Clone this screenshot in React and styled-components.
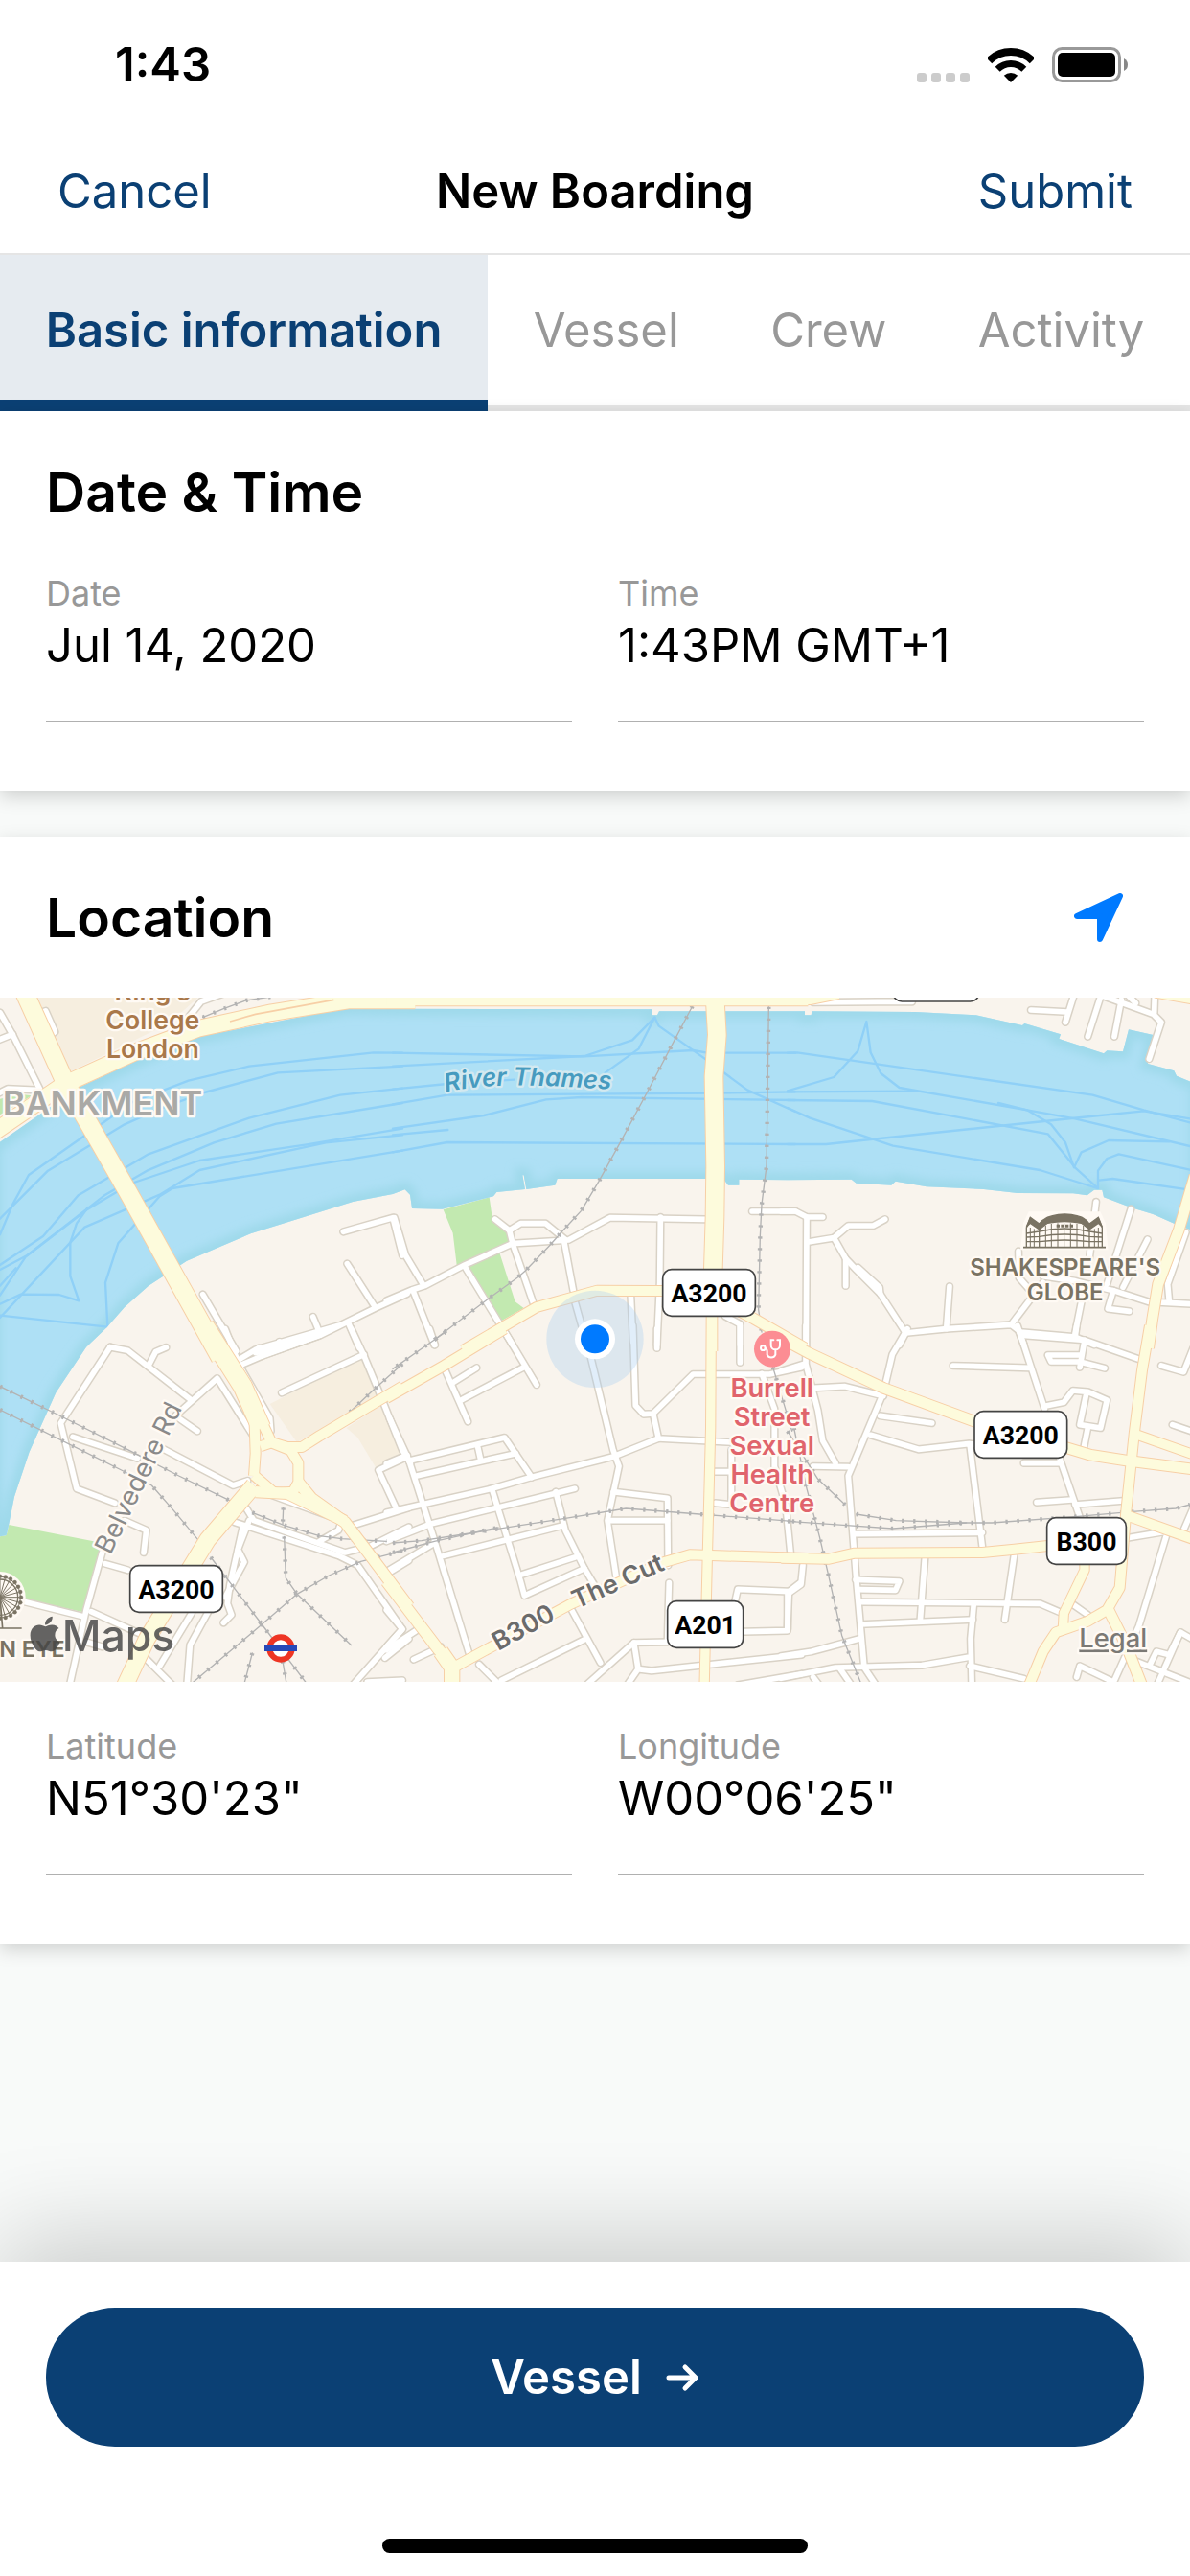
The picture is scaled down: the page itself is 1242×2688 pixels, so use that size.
import React from "react";
import styled, { createGlobalStyle } from "styled-components";
import { FaApple } from "react-icons/fa";

const Colors = {
  Primary: "#0b4074",
  PrimaryLight: "#e6ebf0",
  Link: "#007aff",
  Muted: "#989898",
  Line: "#e5e5e5",
  Background: "#f8faf9",
};

const GlobalStyle = createGlobalStyle`
  * {
    box-sizing: border-box;
  }

  body {
    margin: 0;
    font-family: Inter, "Liberation Sans", sans-serif;
    color: #000;
    background: ${Colors.Background};
  }

  button,
  input {
    font: inherit;
    color: inherit;
    background: none;
    border: 0;
    border-radius: 0;
    padding: 0;
    margin: 0;
  }
`;

const Screen = styled.div`
  display: flex;
  flex-direction: column;
  min-height: 100vh;
  overflow: hidden;
`;

const StatusBar = styled.div`
  display: flex;
  align-items: center;
  justify-content: space-between;
  height: 134px;
  padding: 0 64px 0 120px;
  background: #fff;
`;

const Clock = styled.time`
  font-size: 49px;
  font-weight: 600;
`;

const StatusIcons = styled.div`
  display: flex;
  align-items: flex-end;
  gap: 19px;

  svg {
    display: block;
  }
`;

const NavBar = styled.header`
  display: grid;
  grid-template-columns: 1fr auto 1fr;
  align-items: center;
  height: 132px;
  padding: 0 60px;
  background: #fff;
  border-bottom: 2px solid ${Colors.Line};
`;

const NavTitle = styled.h1`
  margin: 0;
  font-size: 49px;
  font-weight: 600;
`;

const NavButton = styled.button`
  justify-self: ${(props) => props.$side};
  font-size: 49px;
  color: ${Colors.Primary};
`;

const TabBar = styled.nav`
  display: flex;
  background: #fff;
`;

const Tab = styled.button`
  flex: 1 1 auto;
  height: 163px;
  padding: 0 40px 6px;
  font-size: 49px;
  font-weight: ${(props) => (props.$active ? 600 : 400)};
  white-space: nowrap;
  color: ${(props) => (props.$active ? Colors.Primary : Colors.Muted)};
  background: ${(props) => (props.$active ? Colors.PrimaryLight : "#fff")};
  box-shadow: inset 0 ${(props) =>
    props.$active ? `-12px ${Colors.Primary}` : `-6px ${Colors.Line}`};
`;

const Content = styled.main`
  display: flex;
  flex-direction: column;
  gap: 48px;
  padding-bottom: 48px;
`;

const Card = styled.section`
  background: #fff;
  box-shadow: 0 6px 18px rgba(0, 0, 0, 0.17);
`;

const CardHeader = styled.div`
  display: flex;
  align-items: center;
  justify-content: space-between;
  height: 168px;
  padding: 0 48px;
`;

const CardTitle = styled.h2`
  margin: 0;
  font-size: 57px;
  font-weight: 600;
`;

const LocateButton = styled.button`
  display: flex;
  align-items: center;
  justify-content: center;
  width: 96px;
  height: 96px;
`;

const Fields = styled.div`
  display: grid;
  grid-template-columns: 1fr 1fr;
  gap: 48px;
  padding: ${(props) => (props.$spaced ? "45px" : "0")} 48px 72px;
`;

const Field = styled.div`
  display: flex;
  flex-direction: column;
`;

const FieldLabel = styled.label`
  font-size: 36px;
  line-height: 44px;
  color: ${Colors.Muted};
`;

const FieldInput = styled.input`
  width: 100%;
  height: 112px;
  padding-bottom: 47px;
  font-size: 49px;
  line-height: 64px;
  border-bottom: 1px solid #b0b0b0;
`;

const MapView = styled.svg`
  display: block;
  width: 100%;
  height: auto;
  background: #f9f4ed;

  text {
    font-family: Inter, "Liberation Sans", sans-serif;
    font-weight: 600;
    stroke: #fffaf4;
    stroke-width: 14px;
    stroke-linejoin: round;
    paint-order: stroke;
  }
`;

const RoadLayer = styled.g`
  fill: none;
  stroke: ${(props) => props.$color};
  stroke-linecap: ${(props) => props.$cap || "round"};
  stroke-linejoin: round;
`;

const ShieldText = styled.text`
  && {
    font-family: Roboto, "Liberation Sans", sans-serif;
    font-size: 80px;
    font-weight: 700;
    stroke: none;
  }
`;

const MapLogo = styled.g`
  opacity: 0.82;
  color: #444;
  fill: #444;

  && text {
    font-size: 134px;
    font-weight: 500;
    stroke: none;
  }
`;

const Footer = styled.footer`
  display: flex;
  flex-direction: column;
  align-items: center;
  gap: 96px;
  margin-top: auto;
  padding: 48px 48px 24px;
  background: #fff;
  box-shadow: 0 -24px 96px rgba(0, 0, 0, 0.18);
`;

const NextButton = styled.button`
  display: flex;
  align-items: center;
  justify-content: center;
  gap: 24px;
  width: 100%;
  height: 145px;
  font-size: 49px;
  font-weight: 600;
  color: #fff;
  background: ${Colors.Primary};
  border-radius: 72px;
`;

const HomeIndicator = styled.div`
  width: 444px;
  max-width: 60%;
  height: 15px;
  background: #000;
  border-radius: 8px;
`;

// The map is drawn in six tiles, each list holds [width, points] or plain points
const tiles = [
  {
    x: 0,
    y: -33,
    major: [
      [56, "60 -20 205 300 400 640 690 1160"],
      [50, "-30 462 200 305 420 205 620 130 850 80 1090 42 1300 42"],
    ],
    minor: [
      "0 80 40 150 125 320",
      "-10 168 40 148",
      "-10 335 25 318 110 322",
      "130 80 143 75 172 140 160 150",
      "590 95 630 45 700 20",
      "1075 766 1230 722 1260 840",
      "1087 866 1175 1003",
      "980 1032 1002 1085 800 1145",
      "830 1150 1002 1090 1175 1005 1275 960",
      "1090 1050 1125 1130",
      "635 962 740 1140",
    ],
    rail: ["635 95 700 68 770 42 850 30"],
    flow: [
      "0 725 150 575 390 430 490 385 640 330 870 268 1260 248",
      "0 775 40 680 90 588 415 360 590 293 780 248 1170 205 1260 206",
      "0 870 135 780 245 652 465 523 780 410 1065 338 1260 317",
      "0 885 85 840 330 650 460 575 670 487 865 428 1260 363",
      "0 965 80 845 275 695 410 615 625 543 960 493 1260 443",
      "0 1035 265 752 500 650 625 573 1020 487 1260 463",
      "0 1028 337 1064 330 925 370 802 500 655 540 630 1260 512",
      "275 690 240 740 220 800 220 905 247 982 185 963 65 962 0 992",
      "0 935 50 880",
    ],
  },
  {
    x: 1230,
    y: -33,
    major: [
      [28, "-20 44 1300 44"],
      [56, "1009 44 1015 150 1005 280 1010 560 1008 720 1000 980"],
      [30, "1000 960 1000 1140"],
      [30, "220 1137 450 1002 640 950 1000 952"],
      [32, "1000 970 1130 1038 1290 1130"],
    ],
    minor: [
      "5 722 40 840 97 935",
      "-20 982 60 948 100 935 225 870 375 803 550 792 680 722 980 727",
      "320 727 365 762 375 803 440 990",
      "365 762 400 740 478 740 540 790",
      "537 800 565 950",
      "65 955 130 1120",
      "228 880 375 1120",
      "838 720 836 925 827 1120",
      "745 965 752 1110",
      "570 985 608 1120",
      "1125 702 1260 702",
      "1040 1030 1087 1055 1087 1120",
    ],
    rail: [
      "938 60 880 170 796 330 710 490 645 608 590 700 530 765 490 810 415 888 390 910 300 975 135 1100",
      "1177 62 1173 340 1170 560 1155 680 1150 780 1145 1010 1155 1080",
    ],
    flow: [
      "0 206 600 217 940 198 985 206 1260 206",
      "0 248 600 216 750 166 820 95 770 193 665 268",
      "820 95 833 122 985 230 1110 322 1260 390",
      "0 320 170 303 380 290",
      "0 367 170 338 1010 332 1260 328",
      "0 443 285 402 480 352 590 345 1260 354",
      "0 463 172 447",
      "0 517 170 486 1260 492",
    ],
  },
  {
    x: 2466,
    y: -33,
    major: [
      [24, "-20 44 70 42 160 24"],
      [32, "1275 590 1225 760 1160 930 1142 1040 1130 1130"],
      [20, "1150 22 1280 44"],
    ],
    minor: [
      "80 48 280 46 390 46",
      "-20 702 25 702 60 720 110 720",
      "60 720 58 1130",
      "65 798 145 785 190 747 268 747 305 727",
      "145 785 182 850 182 935",
      "182 850 215 885 290 960 370 1083 350 1120",
      "220 878 288 940 290 960",
      "507 937 497 1070",
      "370 1083 497 1070 700 1057 730 1080 900 1095 960 1120",
      "700 1057 800 925",
      "725 1080 740 1120",
      "723 827 725 910 760 950",
      "966 672 945 850",
      "1075 695 1000 930",
      "1127 790 1050 940",
      "800 905 900 920 1020 950 1130 985 1280 993",
      "1020 950 1003 1007 1070 1015",
      "920 985 900 1085",
      "1247 768 1190 930 1195 985",
      "762 72 875 78",
      "895 30 870 110",
      "980 30 940 155",
      "1045 40 1023 155",
      "980 25 1145 85 1170 110 1132 225",
      "1150 20 1148 80",
      "1060 20 1090 50",
    ],
    rail: [],
    flow: [
      "0 206 30 205 955 338 1115 385 1260 424",
      "0 328 400 326",
      "0 325 145 282 220 200 247 108 260 205 292 270 350 315 750 385 900 412 1260 498",
      "0 354 265 357 815 460 900 565 972 630 972 575 1000 537 1037 523 1260 572",
      "0 378 70 410 330 497 790 573 970 630",
      "0 492 120 492 260 477 890 411 1115 388 1260 412",
      "660 363 750 385 825 430 870 487 897 565 920 517 1005 480 1195 484",
      "975 605 1018 600 1260 635",
    ],
  },
  {
    x: 0,
    y: 1047,
    major: [
      [58, "640 -20 760 170 818 300"],
      [30, "796 260 800 380 795 450"],
      [30, "815 270 850 345 900 360 945 360 1000 325 1260 170"],
      [30, "815 358 850 346 910 370 934 410 934 470 918 500 860 504 795 448"],
      [34, "934 470 975 520 1080 595 1160 700 1280 860"],
      [34, "800 500 900 505 1080 592"],
      [50, "795 480 650 650 460 960 385 1120"],
    ],
    minor: [
      "705 -10 750 105 845 270 848 310",
      "750 85 800 55 1060 -20",
      "750 105 820 75 1000 10",
      "810 50 820 75",
      "875 30 882 50",
      "1100 -10 1140 75 1190 195 1260 370 1285 410",
      "882 190 1140 70",
      "1275 390 1185 432 1240 550",
      "345 47 190 285 240 490 360 535",
      "345 47 400 58 595 210",
      "465 105 487 62 520 48",
      "540 270 680 145 790 320",
      "560 270 618 310",
      "228 328 430 395",
      "500 360 730 480 775 465",
      "390 590 458 620 450 690",
      "330 725 400 745",
      "320 690 270 870 215 1120",
      "80 845 260 890",
      "285 875 440 945",
      "270 970 320 985",
      "735 595 1060 700 1120 730 1260 930 1100 1110",
      "770 550 795 590 1080 690 1160 670 1280 610",
      "850 510 1070 590 1060 620 1000 655",
      "1105 605 1280 550",
      "780 590 745 680 765 720 705 830",
      "760 610 720 790 712 850 725 885 700 910",
      "600 880 500 1045",
      "655 870 595 980 585 1110",
      "460 1025 545 1110",
      "1205 1020 1280 960",
      "1215 755 1280 715",
      "1150 1095 1260 1090",
    ],
    rail: [
      "1260 100 1160 190 1080 265",
      "0 170 180 258 400 368 560 450 725 530",
      "0 243 380 432 475 480 545 560 620 650",
      "790 565 890 605 1000 638 1070 647 1210 655",
      "887 550 885 600",
      "890 640 895 770 930 820 1100 980",
      "1260 685 1130 718 1030 762 930 820 820 915 600 1100",
      "660 705 820 915 960 1100",
      "790 1005 765 1100",
      "885 1030 897 1100",
    ],
    flow: [],
  },
  {
    x: 1230,
    y: 1047,
    major: [
      [30, "-20 207 160 105 350 -10"],
      [28, "997 -60 995 300 985 700 975 1120"],
      [30, "190 1050 300 990 560 850 850 720 930 697 1300 708"],
      [34, "-20 780 140 990 190 1050"],
      [46, "150 1000 185 1050 185 1130"],
    ],
    minor: [
      "115 -10 132 40",
      "162 115 235 280",
      "185 160 262 112",
      "210 215 410 110",
      "345 -10 450 165",
      "608 30 690 370 708 420 672 590 700 770",
      "752 -20 760 230 785 257 815 255 940 132 1180 132 1280 110",
      "827 -10 827 50",
      "1087 -20 1087 95",
      "815 255 832 333 1060 345",
      "-20 565 310 490 430 455 690 390 832 333",
      "50 403 350 330 435 455",
      "75 450 385 380",
      "265 355 275 400",
      "-10 270 50 400 130 650 240 1010",
      "-20 412 45 385",
      "-20 655 120 600 510 505 570 490",
      "310 490 400 780 412 825 600 740",
      "160 700 535 605",
      "-20 750 130 660",
      "510 500 540 620 600 740 630 790",
      "400 760 570 705",
      "690 500 860 520 862 730",
      "680 590 860 590",
      "865 785 860 965",
      "560 870 650 1035",
      "270 1040 340 1110",
      "340 1090 605 960",
      "600 1110 755 972 860 970",
      "730 1110 768 1055 810 1060 1280 1010",
      "755 972 768 1055",
      "1070 850 1080 805 1240 812 1235 935 1100 938",
      "1240 812 1275 785",
      "1010 437 1060 437",
      "1010 535 1060 540",
      "1060 370 1060 540",
      "1155 130 1195 240 1195 420 1230 540 1245 690",
      "65 1025 150 985",
      "-20 995 80 930",
      "-20 870 30 930 -20 985",
      "1080 1105 1280 1070",
    ],
    rail: [
      "165 0 100 45 0 115",
      "0 660 90 653 240 630 540 583 730 552 960 570 1260 593",
      "0 690 130 655 280 622 330 612",
      "1190 110 1250 310",
    ],
    flow: [],
  },
  {
    x: 2466,
    y: 1047,
    major: [
      [30, "1134 -20 1110 120 1085 320 1060 560 1040 800 1000 870 940 905 840 940 800 1000 750 1120"],
      [28, "1090 320 1290 390"],
      [32, "-30 14 65 65 300 175 600 285 860 358 950 385 1060 402 1290 432"],
      [30, "1065 575 1290 655"],
      [30, "-20 707 130 710 210 692 610 690 710 680 920 658"],
      [28, "930 680 930 745 865 880 862 930"],
      [32, "1005 870 1060 980 1115 1120"],
    ],
    minor: [
      "-20 122 50 100",
      "57 -20 57 100 95 245 110 340 150 410",
      "80 175 180 170 300 200",
      "375 -10 328 70 300 190 190 450 215 770 240 1050 280 1110",
      "80 420 190 422",
      "290 262 452 285",
      "260 322 410 367 565 350 600 352",
      "570 350 612 690",
      "518 105 755 112",
      "720 -20 805 240",
      "740 10 930 25 1110 88",
      "930 25 915 110",
      "905 -20 900 20",
      "915 72 815 72 825 93 915 93 993 113",
      "1170 105 1240 125 1270 50",
      "805 232 865 220 893 183 940 187 1000 213 980 300 915 290 935 195",
      "940 300 927 365",
      "1205 290 1270 312",
      "740 410 855 410",
      "850 390 915 580",
      "780 533 890 525",
      "900 540 1050 528",
      "1060 645 1180 625",
      "1185 640 1100 920 1010 1120",
      "1270 550 1240 620",
      "215 632 610 628",
      "48 730 42 790 0 820 0 930",
      "213 775 350 780 338 808 225 806",
      "430 708 415 905",
      "228 845 790 850 860 880",
      "230 915 580 900",
      "710 695 680 900",
      "583 850 573 960 577 1120",
      "890 850 940 885",
      "-20 1014 75 1000 225 960",
      "-20 1084 150 1050 420 1043 565 1018",
      "570 1045 740 1085",
      "80 1080 110 1120",
      "165 1055 210 1120",
      "905 1080 915 1045 1020 1095",
      "1090 1030 1280 1105",
      "1135 1040 1155 1000 1195 1010 1230 940 1280 968",
      "1230 940 1150 1120",
    ],
    rail: [
      "0 592 185 605 330 615 560 597 640 597 900 578 1080 562 1215 552 1260 540",
      "215 570 340 590 560 597",
      "0 310 95 460 180 540",
      "20 300 60 490 100 640 130 770 170 950 230 1100",
    ],
    flow: [],
  },
];

const waterPath =
  "M-20 466 0 452 245 282 440 192 600 127 1090 32 1230 35 2040 37 2040 55 2058 55 2064 43 2210 43 2520 43 2520 55 2540 55 2542 43 2866 45 3056 55 3201 87 3208 81 3321 115 3316 129 3456 175 3466 166 3516 169 3534 100 3611 117 3594 207 3676 229 3684 245 3750 272V735L3676 707 3610 678 3541 657 3456 625 3451 602 3426 602 3404 619 3360 613 3186 612 3080 600 2901 592 2804 575 2791 587 2681 581 2666 569 2466 571 2314 569 2314 587 2280 587 2265 567 1745 567 1738 587 1648 600 1640 556 1636 556 1644 600 1555 609 1545 622 1385 662 1290 660 1284 617 1268 601 1230 615 1105 639 785 739 585 824 465 902 390 969 335 1032 270 1094 175 1237 92 1422 45 1562 28 1647 20 1683-20 1690z";

const shields = [
  { x: 2075, y: 851, width: 290, name: "A3200" },
  { x: 3051, y: 1295, width: 290, name: "A3200" },
  { x: 407, y: 1778, width: 290, name: "A3200" },
  { x: 3278, y: 1628, width: 248, name: "B300" },
  { x: 2090, y: 1889, width: 237, name: "A201" },
];

const TiledRoads = ({ kind, extra = 0, ...rest }) => (
  <RoadLayer {...rest}>
    {tiles.map((tile) => (
      <g key={`${tile.x}-${tile.y}`} transform={`translate(${tile.x} ${tile.y})`}>
        {tile[kind].map((road, i) => {
          const [width, points] = Array.isArray(road) ? road : [0, road];
          return <polyline key={i} points={points} strokeWidth={width + extra} />;
        })}
      </g>
    ))}
  </RoadLayer>
);

const Wheel = () => (
  <g stroke="#7a7363" fill="#7a7363">
    <circle cx="0" cy="1877" r="80" fill="#fffaf4" stroke="none" />
    <circle cx="0" cy="1877" r="56" fill="none" strokeWidth="4" />
    <circle cx="0" cy="1877" r="64" fill="none" strokeWidth="3" />
    {Array.from({ length: 24 }, (_, i) => {
      const angle = (i * Math.PI) / 12;
      const dx = Math.cos(angle);
      const dy = Math.sin(angle);
      return (
        <g key={i}>
          <line x1="0" y1="1877" x2={dx * 60} y2={1877 + dy * 60} strokeWidth="3" />
          <circle cx={dx * 66} cy={1877 + dy * 66} r="6" strokeWidth="1" />
        </g>
      );
    })}
    <path d="M0 1877 8 1974M0 1974H68" fill="none" strokeWidth="5" />
  </g>
);

const Theatre = () => (
  <g transform="translate(3204 678)" fill="none" stroke="#7a7363" strokeWidth="4">
    <path d="M0 104 8 30 22 0H236L250 30 257 104z" fill="#fffaf4" stroke="#fffaf4" strokeWidth="16" />
    <path d="M10 103V42L22 12 50 40V103M247 103V42L235 12 207 40V103" />
    <path
      d="M22 10 50 30Q70 2 130 0 190 2 207 30L235 10 247 40 235 28 207 48 182 28Q130 18 76 28L50 48 22 28 10 40z"
      fill="#7a7363"
    />
    <path d="M0 104H258" strokeWidth="5" />
    <path d="M10 60 50 54Q130 36 207 54L247 60M10 72 50 70Q130 56 207 70L247 72M10 86 50 86Q130 76 207 86L247 86" />
    <path d="M22 42V103M34 46V103M70 36V103M88 30V103M108 28V103M128 28V103M148 28V103M168 30V103M188 36V103M223 46V103M235 42V103" strokeWidth="3" />
    <path d="M104 37H158" strokeWidth="9" strokeDasharray="10 4" />
  </g>
);

const LocationMap = () => (
  <MapView viewBox="0 0 3726 2142" role="img" aria-label="Map of the boarding location">
    <defs>
      <clipPath id="river">
        <path d={waterPath} />
      </clipPath>
      <filter id="bank">
        <feGaussianBlur stdDeviation="14" />
      </filter>
      <path id="thames" d="M1396 296Q1500 272 1650 275T1940 290" />
    </defs>

    <path d="M100 0H620L530 80 220 232z" fill="#f6eedf" />
    <path d="M845 1272 1140 1122 1190 1247 930 1392zM1085 1347 1200 1272 1265 1427 1180 1477 1120 1377z" fill="#f6eedf" />
    <path d="M28 1650 320 1707 260 1924 75 1882 0 1847V1687L20 1683z" fill="#c2e9b0" />
    <path d="M0 317 60 302 100 307 0 367z" fill="#c2e9b0" />
    <path
      d="M1388 664 1532 625 1542 695 1580 727 1600 772 1565 802 1613 952 1640 972 1570 1012 1465 847 1430 837 1418 737z"
      fill="#c2e9b0"
    />
    <path d={waterPath} fill="#aee0f5" />
    <g clipPath="url(#river)">
      <path d={waterPath} fill="none" stroke="#9ed9ea" strokeWidth="44" filter="url(#bank)" />
      <TiledRoads kind="flow" extra={7} $color="#8fd0f7" />
    </g>

    <TiledRoads kind="minor" extra={26} $color="#d9d2c6" />
    <TiledRoads kind="minor" extra={17} $color="#fff" />
    <TiledRoads kind="rail" extra={4} $color="#b3b3b3" />
    <TiledRoads kind="rail" extra={13} $color="#b3b3b3" $cap="butt" strokeDasharray="7 29" />
    <TiledRoads kind="major" extra={6} $color="#f7cfa6" $cap="butt" />
    <TiledRoads kind="major" $color="#fdfbdc" $cap="butt" />
    <path d="M720 75 800 52 1045 7" fill="none" stroke="#f7cfa6" strokeWidth="5" />

    <circle cx="1863" cy="1069" r="152" fill="#a9cdf2" opacity="0.35" />
    <circle cx="1863" cy="1069" r="63" fill="#fff" />
    <circle cx="1863" cy="1069" r="45" fill={Colors.Link} />

    <g fill="#a9784a" fontSize="80" textAnchor="middle">
      <text x="478" y="9">King’s</text>
      <text x="478" y="99">College</text>
      <text x="478" y="189">London</text>
    </g>
    <text x="8" y="368" fontSize="108" fill="#aaa9a6">
      BANKMENT
    </text>
    <text fontSize="78" fontStyle="italic" fill="#479bbf" style={{ stroke: "#d3e9f0" }}>
      <textPath href="#thames">River Thames</textPath>
    </text>
    <text transform="translate(346 1747) rotate(-64)" fontSize="82" fill="#8a8a8a" style={{ fontWeight: 400 }}>
      Belvedere Rd
    </text>
    <g fill="#6b6b6b" fontSize="80">
      <text transform="translate(1560 2046) rotate(-29)">B300</text>
      <text transform="translate(1806 1914) rotate(-24)">The Cut</text>
    </g>

    <circle cx="2418" cy="1100" r="57" fill="#fc8d93" />
    <g fill="none" stroke="#fff" strokeWidth="6" strokeLinecap="round">
      <path d="M2422 1072H2414V1088A14 14 0 0 0 2442 1088V1072H2434M2428 1102V1118A14 14 0 0 1 2402 1118V1108Q2402 1100 2396 1098" />
      <circle cx="2389" cy="1097" r="7" />
    </g>
    <g fill="#e0646c" fontSize="82" textAnchor="middle">
      <text x="2417" y="1252">Burrell</text>
      <text x="2417" y="1342">Street</text>
      <text x="2417" y="1432">Sexual</text>
      <text x="2417" y="1522">Health</text>
      <text x="2417" y="1612">Centre</text>
    </g>

    <Theatre />
    <g fill="#7a7363" fontSize="72" textAnchor="middle">
      <text x="3335" y="870">SHAKESPEARE'S</text>
      <text x="3335" y="947">GLOBE</text>
    </g>

    <Wheel />
    <text x="203" y="2064" fontSize="70" textAnchor="end" fill="#7a7363">
      N EYE
    </text>

    <circle cx="879" cy="2037" r="35" fill="#fff" stroke="#ee3524" strokeWidth="18" />
    <rect x="828" y="2028" width="102" height="18" fill="#2748b8" />

    <rect x="2796" y="-134" width="270" height="146" rx="28" fill="#fff" stroke="#444" strokeWidth="5" />
    {shields.map((shield) => (
      <g key={`${shield.x}-${shield.y}`}>
        <rect x={shield.x} y={shield.y} width={shield.width} height="146" rx="28" fill="#fff" stroke="#444" strokeWidth="5" />
        <ShieldText x={shield.x + shield.width / 2} y={shield.y + 102} textAnchor="middle">
          {shield.name}
        </ShieldText>
      </g>
    ))}

    <MapLogo>
      <FaApple x="78" y="1929" size="126" />
      <text x="194" y="2045">Maps</text>
    </MapLogo>
    <a href="#legal">
      <text x="3379" y="2035" fontSize="82" fill="#7b7975" textDecoration="underline" style={{ fontWeight: 500 }}>
        Legal
      </text>
    </a>
  </MapView>
);

const TextField = ({ id, label, value }) => (
  <Field>
    <FieldLabel htmlFor={id}>{label}</FieldLabel>
    <FieldInput id={id} type="text" defaultValue={value} />
  </Field>
);

const App = () => {
  return (
    <Screen>
      <GlobalStyle />
      <StatusBar>
        <Clock>1:43</Clock>
        <StatusIcons>
          <svg width="55" height="10" fill="#ccc">
            <rect width="10" height="10" rx="3" />
            <rect x="15" width="10" height="10" rx="3" />
            <rect x="30" width="10" height="10" rx="3" />
            <rect x="45" width="10" height="10" rx="3" />
          </svg>
          <svg width="48" height="36" fill="none" stroke="#000">
            <path d="M1.4 13.4A32 32 0 0 1 46.6 13.4" strokeWidth="8" />
            <path d="M10.2 22.2A19.5 19.5 0 0 1 37.8 22.2" strokeWidth="7" />
            <path d="M24 36 16.8 28.8A11 11 0 0 1 31.2 28.8z" fill="#000" stroke="none" />
          </svg>
          <svg width="80" height="37">
            <rect x="1.5" y="1.5" width="69" height="34" rx="9" fill="none" stroke="#999" strokeWidth="3" />
            <rect x="6" y="6" width="60" height="25" rx="5" />
            <path d="M75 12Q79 14 79 18.5T75 25z" fill="#888" />
          </svg>
        </StatusIcons>
      </StatusBar>
      <NavBar>
        <NavButton $side="start">Cancel</NavButton>
        <NavTitle>New Boarding</NavTitle>
        <NavButton $side="end">Submit</NavButton>
      </NavBar>
      <TabBar>
        <Tab $active>Basic information</Tab>
        <Tab>Vessel</Tab>
        <Tab>Crew</Tab>
        <Tab>Activity</Tab>
      </TabBar>
      <Content>
        <Card>
          <CardHeader>
            <CardTitle>Date &amp; Time</CardTitle>
          </CardHeader>
          <Fields>
            <TextField id="date" label="Date" value="Jul 14, 2020" />
            <TextField id="time" label="Time" value="1:43PM GMT+1" />
          </Fields>
        </Card>
        <Card>
          <CardHeader>
            <CardTitle>Location</CardTitle>
            <LocateButton aria-label="Use current location">
              <svg width="51" height="51" fill={Colors.Link} stroke={Colors.Link} strokeWidth="6" strokeLinejoin="round">
                <path d="M48 3 3 24H27V48z" />
              </svg>
            </LocateButton>
          </CardHeader>
          <LocationMap />
          <Fields $spaced>
            <TextField id="latitude" label="Latitude" value={"N51°30'23\""} />
            <TextField id="longitude" label="Longitude" value={"W00°06'25\""} />
          </Fields>
        </Card>
      </Content>
      <Footer>
        <NextButton>
          Vessel
          <svg width="36" height="30" fill="none" stroke="#fff" strokeWidth="5" strokeLinecap="round" strokeLinejoin="round">
            <path d="M4 15H32M21 4 32 15 21 26" />
          </svg>
        </NextButton>
        <HomeIndicator />
      </Footer>
    </Screen>
  );
};

export default App;
